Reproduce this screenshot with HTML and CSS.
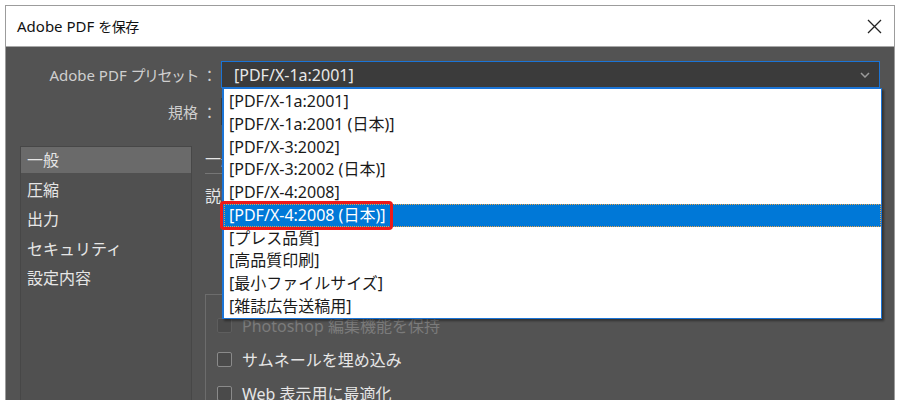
FILE: index.html
```html
<!DOCTYPE html>
<html lang="ja">
<head>
  <meta charset="UTF-8">
  <title>Adobe PDF を保存</title>
  <link rel="stylesheet" href="styles.css">
</head>
<body>
  <div class="ventana">
    <div class="titulo">
      <span>Adobe PDF <span class="jp">を保存</span></span>
      <svg class="cerrar" width="15" height="15" viewBox="0 0 15 15">
        <path d="M1 1L14 14M14 1L1 14" stroke="#222" stroke-width="1.3" fill="none"/>
      </svg>
    </div>

    <div class="cuerpo">
      <div class="campo">
        <label>Adobe PDF <span class="kana">プリセット</span> ：</label>
        <div class="select activo">
          <span>[PDF/X-1a:2001]</span>
          <svg width="10" height="6" viewBox="0 0 10 6"><path d="M1 1L5 5L9 1" stroke="#9a9a9a" stroke-width="1.5" fill="none"/></svg>
        </div>
      </div>
      <div class="campo segundo">
        <label>規格 ：</label>
        <div class="select"></div>
      </div>

      <div class="principal">
        <ul class="menu">
          <li class="sel">一般</li>
          <li>圧縮</li>
          <li>出力</li>
          <li>セキュリティ</li>
          <li>設定内容</li>
        </ul>
        <div class="panel">
          <h3>一般</h3>
          <div class="desc">説明 ：</div>
          <div class="grupo">
            <div class="check off"><i></i>Photoshop 編集機能を保持</div>
            <div class="check"><i></i>サムネールを埋め込み</div>
            <div class="check"><i></i>Web 表示用に最適化</div>
          </div>
        </div>
      </div>

      <!-- lista desplegable abierta -->
      <ul class="lista">
        <li>[PDF/X-1a:2001]</li>
        <li>[PDF/X-1a:2001 (日本)]</li>
        <li>[PDF/X-3:2002]</li>
        <li>[PDF/X-3:2002 (日本)]</li>
        <li>[PDF/X-4:2008]</li>
        <li class="sel"><span class="marca">[PDF/X-4:2008 (日本)]</span></li>
        <li>[プレス品質]</li>
        <li>[高品質印刷]</li>
        <li>[最小ファイルサイズ]</li>
        <li>[雑誌広告送稿用]</li>
      </ul>
    </div>
  </div>
</body>
</html>
```

FILE: styles.css
```css
*{
  margin: 0; padding: 0;
  box-sizing: border-box;
  font-family: "Noto Sans", "Noto Sans CJK JP", sans-serif;
}
body{
  background: #fff;
}
ul{
  list-style: none;
}
.ventana{
  margin: 5px 5px 0;
  height: 395px;
  border: 1px solid #9c9c9c;
  border-bottom: 0;
  overflow: hidden;
}
.titulo{
  height: 41px;
  background: #fff;
  border-bottom: 1px solid #a8a8a8;
  display: flex;
  align-items: center;
  justify-content: space-between;
  padding: 0 12px 0 11px;
  font-size: 15px; color: #111;
}
.titulo .jp{
  font-size: 14px;
  letter-spacing: -0.5px;
}
.cuerpo{
  position: relative;
  height: 100%;
  background: #535353;
  padding: 14px 14px 0 14px;
}
.campo{
  display: flex;
  align-items: center;
  gap: 4px;
  height: 27px;
}
.campo label{
  width: 197px;
  text-align: right;
  color: #cfcfcf;
  font-size: 15px;
}
.kana{
  letter-spacing: -1.5px;
}
.segundo{
  margin-top: 10px;
}
.select{
  flex: 1;
  height: 27px;
  background: #3b3b3b;
  border: 1px solid #3b3b3b;
  display: flex;
  align-items: center;
  justify-content: space-between;
  padding: 0 9px 0 12px;
  color: #e8e8e8;
  font-size: 16px;
}
.activo{
  border-color: #1b74d6;
}
.principal{
  display: grid;
  grid-template-columns: 172px 1fr;
  gap: 13px;
  margin-top: 21px;
}
.menu{
  height: 260px;
  border: 1px solid #474747;
  background: #505050;
}
.menu li{
  height: 29.3px; line-height: 29.3px;
  padding-left: 6px;
  color: #e6e6e6;
  font-size: 16px;
}
.menu li.sel{
  height: 26px; line-height: 26px;
  margin-bottom: 3px;
  background: #6a6a6a;
}
.panel{
  color: #e6e6e6;
  font-size: 16px;
}
.panel h3{
  font-size: 16px; font-weight: 400;
  height: 28px; line-height: 26px;
  border-bottom: 1px solid #767676;
}
.desc{
  margin-top: 9px;
  height: 24px;
}
.grupo{
  margin-top: 87px;
  height: 120px;
  border: 1px solid #6c6c6c;
  border-right: 0;
  padding: 13px 0 0 11px;
}
.check{
  display: flex;
  align-items: center;
  gap: 10px;
  height: 34px;
  color: #e6e6e6;
}
.check i{
  width: 15px; height: 15px;
  border: 1px solid #8a8a8a;
  border-radius: 2px;
  background: #4a4a4a;
}
.check.off{
  color: #7b7b7b;
}
.check.off i{
  border-color: #5e5e5e;
}
.lista{
  position: absolute;
  left: 216px; top: 41px;
  width: 660px;
  background: #fff;
  border: 1px solid #1b74d6;
  border-left-width: 2px;
  padding-top: 1px;
  box-shadow: 2px 2px 2px rgba(0,0,0,.4);
}
.lista li{
  height: 22.75px; line-height: 22.75px;
  padding-left: 5px;
  color: #1a1a1a;
  font-size: 16px;
}
.lista li.sel{
  background: #0078d7;
  color: #fff;
  outline: 1px dotted #e6a24a;
  outline-offset: -1px;
}
.marca{
  position: relative;
}
.marca::after{
  content: "";
  position: absolute;
  left: -9px; right: -8px;
  top: -3px; bottom: -4px;
  border: 3px solid #ee1a1a;
  border-radius: 4px;
}
```
